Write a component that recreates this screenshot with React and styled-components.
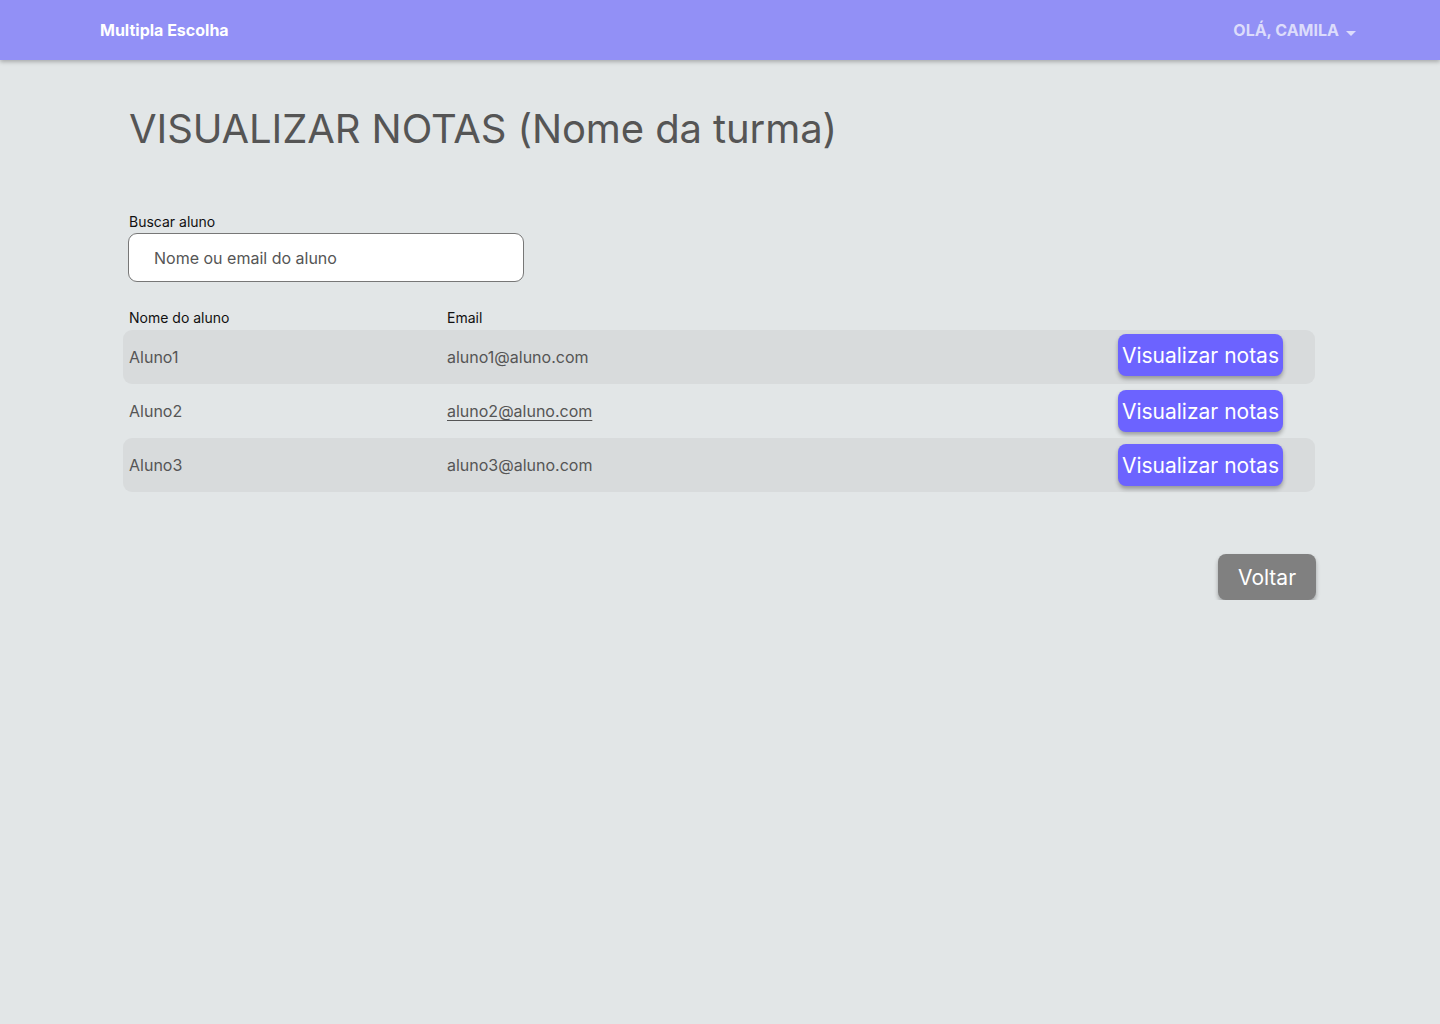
import React from "react";
import styled, { createGlobalStyle } from "styled-components";

const Global = createGlobalStyle`
  html, body { margin: 0; padding: 0; background: #e2e6e7; }
  body { font-family: Inter, "Noto Sans", sans-serif; }
  * { box-sizing: border-box; }
`;

const NavBar = styled.header`
  height: 60px;
  background: #9290f6;
  box-shadow: 0 2px 4px rgba(0, 0, 0, 0.25);
  display: flex;
  align-items: center;
  justify-content: space-between;
  padding: 0 84px 0 100px;
`;

const Brand = styled.div`
  color: #ffffff;
  font-weight: 700;
  font-size: 16px;
`;

const UserMenu = styled.div`
  display: flex;
  align-items: center;
  gap: 7px;
  color: #dcdcfb;
  font-weight: 700;
  font-size: 16px;
`;

const Caret = styled.span`
  width: 0;
  height: 0;
  margin-top: 6px;
  border-left: 5px solid transparent;
  border-right: 5px solid transparent;
  border-top: 5px solid #dcdcfb;
`;

const Main = styled.main`
  width: 1192px;
  margin: 0 0 0 123px;
  padding-top: 45px;
`;

const Title = styled.h1`
  margin: 0 0 0 6px;
  font-size: 40px;
  line-height: 48px;
  font-weight: 400;
  letter-spacing: -0.1px;
  color: #555555;
`;

const SearchField = styled.label`
  display: flex;
  flex-direction: column;
  gap: 3px;
  margin: 60px 0 0 5px;
  width: 396px;
  font-size: 14px;
  color: #111;
  span { padding-left: 1px; line-height: 17px; }
`;

const SearchInput = styled.input`
  height: 49px;
  border: 1px solid #777;
  border-radius: 9px;
  background: #fff;
  padding: 0 25px;
  font-family: inherit;
  font-size: 16px;
  color: #333;
  outline: none;
  &::placeholder { color: #555; }
`;

const Table = styled.div`
  margin-top: 27px;
  display: flex;
  flex-direction: column;
`;

const HeaderRow = styled.div`
  display: grid;
  grid-template-columns: 318px 1fr;
  padding: 0 6px 4px;
  font-size: 14px;
  line-height: 17px;
  color: #111;
`;

const Row = styled.div`
  display: grid;
  grid-template-columns: 318px 1fr auto;
  align-items: center;
  height: 54px;
  padding: 0 32px 0 6px;
  border-radius: 9px;
  background: ${(p) => (p.$shaded ? "#d8dbdc" : "transparent")};
  font-size: 16px;
  color: #555555;
`;

const EmailText = styled.span`
  text-decoration: ${(p) => (p.$underline ? "underline" : "none")};
  text-underline-offset: 3px;
`;

const PrimaryButton = styled.button`
  height: 42px;
  padding: 0 4px;
  border: none;
  border-radius: 8px;
  background: #6c63ff;
  color: #fff;
  font-family: inherit;
  font-size: 21px;
  box-shadow: 0 3px 4px rgba(0, 0, 0, 0.3);
  cursor: pointer;
  margin-top: ${(p) => p.$offset || 0}px;
`;

const Footer = styled.div`
  display: flex;
  justify-content: flex-end;
  margin: 62px -1px 0 0;
`;

const GreyButton = styled.button`
  height: 46px;
  width: 98px;
  border: none;
  border-radius: 8px;
  background: #808080;
  color: #fff;
  font-family: inherit;
  font-size: 21px;
  box-shadow: 0 3px 4px rgba(0, 0, 0, 0.3);
  cursor: pointer;
`;

const alunos = [
  { nome: "Aluno1", email: "aluno1@aluno.com", offset: -4 },
  { nome: "Aluno2", email: "aluno2@aluno.com", underline: true, offset: 0 },
  { nome: "Aluno3", email: "aluno3@aluno.com", offset: 0 },
];

export default function App() {
  return (
    <>
      <Global />
      <NavBar>
        <Brand>Multipla Escolha</Brand>
        <UserMenu>
          OLÁ, CAMILA <Caret />
        </UserMenu>
      </NavBar>
      <Main>
        <Title>VISUALIZAR NOTAS (Nome da turma)</Title>
        <SearchField>
          <span>Buscar aluno</span>
          <SearchInput placeholder="Nome ou email do aluno" />
        </SearchField>
        <Table>
          <HeaderRow>
            <span>Nome do aluno</span>
            <span>Email</span>
          </HeaderRow>
          {alunos.map((a, i) => (
            <Row key={a.nome} $shaded={i % 2 === 0}>
              <span>{a.nome}</span>
              <EmailText $underline={a.underline}>{a.email}</EmailText>
              <PrimaryButton $offset={a.offset}>Visualizar notas</PrimaryButton>
            </Row>
          ))}
        </Table>
        <Footer>
          <GreyButton>Voltar</GreyButton>
        </Footer>
      </Main>
    </>
  );
}
